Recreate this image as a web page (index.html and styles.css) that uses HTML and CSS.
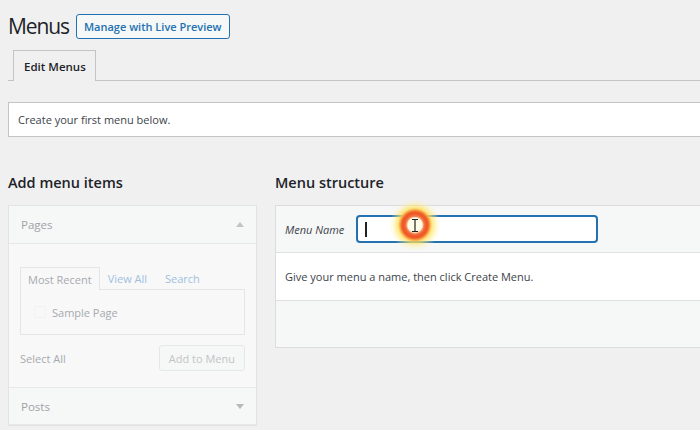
FILE: index.html
```html
<!DOCTYPE html>
<html>
<head>
<meta charset="utf-8">
<link rel="stylesheet" href="styles.css">
</head>
<body>
<div class="wrap">
  <div class="head">
    <h1 class="title">Menus</h1>
    <span class="live-btn">Manage with Live Preview</span>
  </div>
  <div class="tabs">
    <span class="tab">Edit Menus</span>
  </div>
  <div class="notice">Create your first menu below.</div>
  <div class="cols">
    <div class="col-left">
      <h2 class="col-title">Add menu items</h2>
      <div class="box disabled">
        <div class="box-head">
          <span>Pages</span>
          <span class="tri up"></span>
        </div>
        <div class="box-body">
          <div class="mini-tabs">
            <span class="mini-tab active">Most Recent</span>
            <span class="mini-tab link">View All</span>
            <span class="mini-tab link">Search</span>
          </div>
          <div class="list">
            <span class="check"></span>
            <span>Sample Page</span>
          </div>
          <div class="actions">
            <span>Select All</span>
            <span class="add-btn">Add to Menu</span>
          </div>
        </div>
        <div class="box-head closed">
          <span>Posts</span>
          <span class="tri down"></span>
        </div>
      </div>
    </div>
    <div class="col-right">
      <h2 class="col-title">Menu structure</h2>
      <div class="menu-box">
        <div class="menu-head">
          <label class="menu-label">Menu Name</label>
          <div class="name-input"><span class="caret"></span></div>
        </div>
        <div class="menu-body">Give your menu a name, then click Create Menu.</div>
        <div class="menu-foot"></div>
      </div>
    </div>
  </div>
</div>
<div class="click-mark">
  <svg class="ibeam" width="10" height="15" viewBox="0 0 10 15"><path d="M2 1.5h6M5 1.5v12M2 13.5h6" stroke="#222" stroke-width="1.2" fill="none"/></svg>
</div>
</body>
</html>
```

FILE: styles.css
```css
* { box-sizing: border-box; }
html, body { margin: 0; padding: 0; }
body {
  background: #f0f0f1;
  font-family: "Open Sans", "Noto Sans", sans-serif;
  color: #3c434a;
  width: 700px;
  height: 430px;
  overflow: hidden;
  position: relative;
}
.wrap { padding: 12px 0 0 8px; width: 700px; overflow: hidden; }
.head { display: flex; align-items: center; gap: 7px; height: 28px; }
.title { margin: 0; font-size: 21px; font-weight: 400; color: #1d2327; line-height: 28px; letter-spacing: -1.1px; }
.live-btn {
  display: inline-flex; align-items: center;
  height: 25px; padding: 0 7px;
  border: 1px solid #2271b1; border-radius: 3px;
  background: #f6f7f7; color: #2271b1;
  font-size: 11px; font-weight: 600;
}
.tabs { margin-top: 10px; border-bottom: 1px solid #c3c4c7; padding-left: 5px; height: 31px; display: flex; }
.tab {
  display: inline-flex; align-items: center;
  height: 31px; padding: 0 9px 0 10px;
  border: 1px solid #c3c4c7; border-bottom: none;
  background: #f0f0f1; color: #1d2327;
  font-size: 11.5px; font-weight: 600;
  margin-bottom: -1px;
}
.notice {
  margin-top: 21px; height: 35px;
  background: #fff; border: 1px solid #c3c4c7; border-right: none;
  padding: 0 9px; display: flex; align-items: center;
  font-size: 11px; color: #3c434a;
}
.cols { display: flex; gap: 18px; margin-top: 36px; }
.col-left { width: 249px; flex: none; }
.col-right { flex: 1; }
.col-title { margin: 0; height: 32px; font-size: 14.5px; font-weight: 600; color: #1d2327; line-height: 20px; }
.box { border: 1px solid #e2e3e4; background: #f6f7f7; }
.box-head {
  height: 38px; display: flex; align-items: center; justify-content: space-between;
  padding: 0 12px 0 12px; font-size: 11.5px; color: #9ea3a8;
  border-bottom: 1px solid #e6e7e8;
}
.box-head.closed { border-top: 1px solid #e6e7e8; height: 38px; padding-top: 1px; }
.tri { width: 0; height: 0; border-left: 4px solid transparent; border-right: 4px solid transparent; }
.tri.up { border-bottom: 5px solid #c3c4c7; }
.tri.down { border-top: 5px solid #b5b8bc; }
.box-body { padding: 23px 11px 16px 11px; background: #f8f8f9; }
.mini-tabs { display: flex; align-items: flex-end; height: 22px; font-size: 11px; }
.mini-tab { display: inline-flex; align-items: center; height: 22px; padding: 0 7px; color: #9fc0de; }
.mini-tab.active { border: 1px solid #e4e5e6; border-bottom: none; color: #a7aaad; background: #f8f8f9; padding: 0 7px; margin-bottom: -1px; height: 23px; }
.mini-tab.link { padding: 0 4px 0 8px; }
.mini-tab.link + .mini-tab.link { padding-left: 14px; }
.list {
  height: 46px; border: 1px solid #e4e5e6; display: flex; align-items: center; gap: 6px;
  padding-left: 13px; font-size: 11px; color: #a7aaad;
}
.check { width: 12px; height: 12px; border: 1px solid #f2f2f3; border-radius: 2px; }
.actions { display: flex; justify-content: space-between; align-items: center; margin-top: 10px; font-size: 11px; color: #a7aaad; }
.add-btn {
  height: 26px; display: inline-flex; align-items: center; padding: 0 9px;
  border: 1px solid #e6e7e8; border-radius: 3px; color: #c3c4c7; background: #f6f7f7;
}
.menu-box { border: 1px solid #dcdcde; border-right: none; background: #f6f7f7; }
.menu-head {
  height: 47px; display: flex; align-items: center; gap: 12px; padding-left: 9px;
  border-bottom: 1px solid #e0e0e2; background: #f6f7f7;
}
.menu-label { font-style: italic; font-size: 11px; color: #3c434a; }
.name-input {
  width: 242px; height: 28px; border: 2px solid #2271b1; border-radius: 4px; background: #fff;
  display: flex; align-items: center; padding-left: 7px;
}
.caret { width: 1.5px; height: 15px; background: #1d2327; }
.menu-body {
  height: 48px; background: #fff; display: flex; align-items: center; padding-left: 9px;
  font-size: 11px; color: #3c434a; border-bottom: 1px solid #e0e0e2;
}
.menu-foot { height: 46px; background: #f6f7f7; }
.click-mark {
  position: absolute; left: 389px; top: 199px; width: 52px; height: 52px; border-radius: 50%;
  background: radial-gradient(circle, rgba(255,250,210,0.5) 0 7px, #f47a45 9px, #ef5a2a 11px, #f05a28 13px, #f8a545 15px, rgba(255,225,90,0.75) 17px, rgba(255,240,150,0.3) 22px, rgba(255,240,150,0) 26px);
  display: flex; align-items: center; justify-content: center;
}
.ibeam { display: block; }
```
